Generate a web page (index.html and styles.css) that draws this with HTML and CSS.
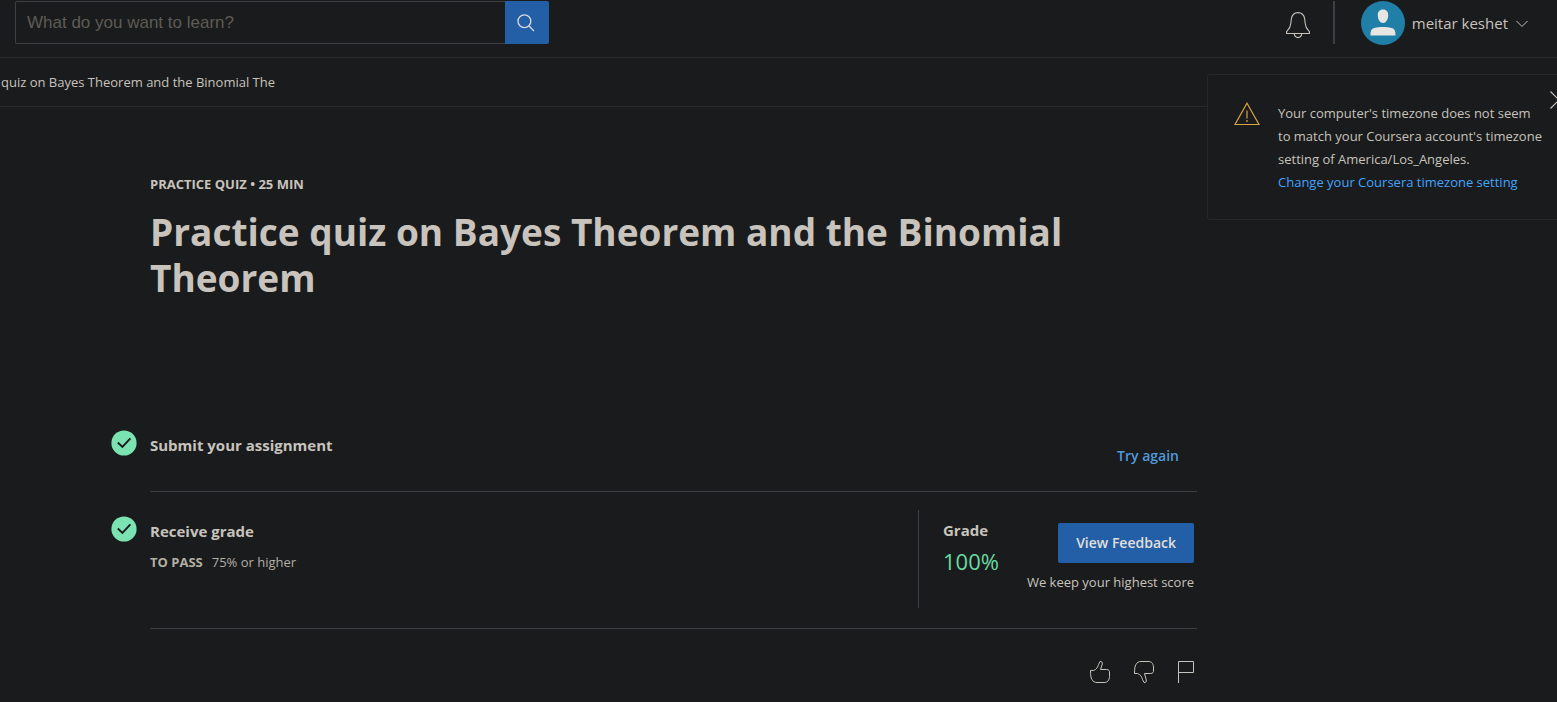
FILE: index.html
```html
<!DOCTYPE html>
<html lang="en">
<head>
<meta charset="utf-8">
<title>Practice quiz on Bayes Theorem and the Binomial Theorem</title>
<link rel="stylesheet" href="styles.css">
</head>
<body>
<header class="topbar">
  <form class="search" role="search">
    <input class="search-input" type="text" placeholder="What do you want to learn?" aria-label="Search">
    <button class="search-button" type="button" aria-label="Submit search">
      <svg width="18" height="18" viewBox="0 0 18 18" fill="none" stroke="currentColor" stroke-width="1.3"><circle cx="7.4" cy="7.2" r="6.4"/><path d="M12 12l5 5"/></svg>
    </button>
  </form>
  <div class="account">
    <button class="icon-button bell" type="button" aria-label="Notifications">
      <svg width="26" height="28" viewBox="0 0 26 28" fill="none" stroke="currentColor" stroke-width="1.1"><path d="M1.6 22.5V20.5C3.500 18.500 5.500 17 5.800 12.500L6.300 8C7 3.800 9.300 1.600 13 1.600S19 3.800 19.700 8L20.200 12.500C20.500 17 22.500 18.500 24.400 20.500V22.500Z"/><path d="M9.200 22.700C9.600 25.500 11 26.600 13 26.600S16.400 25.500 16.800 22.700"/></svg>
    </button>
    <span class="divider"></span>
    <button class="profile" type="button">
      <svg class="avatar" width="44" height="44" viewBox="0 0 44 44"><circle cx="22" cy="22" r="22" fill="#207fa6"/><path d="M22 8.500c3.500 0 5.400 2.400 5.200 6-.2 4.200-2.300 7.500-5.200 7.500s-5-3.300-5.200-7.500c-.2-3.600 1.700-6 5.200-6z" fill="#e8e6e3"/><path d="M9.500 34.500c0-5.500 1.200-6.800 4-7.500 5-1.300 12-1.300 17 0 2.800.7 4 2 4 7.500z" fill="#e8e6e3"/></svg>
      <span>meitar keshet</span>
      <svg class="caret" width="12" height="8" viewBox="0 0 12 8" fill="none" stroke="currentColor"><path d="M.5 1L6 6.500 11.500 1"/></svg>
    </button>
  </div>
</header>

<nav class="breadcrumb">quiz on Bayes Theorem and the Binomial The</nav>

<aside class="toast">
  <svg class="toast-icon" width="26" height="24" viewBox="0 0 26 24" fill="none" stroke="currentColor" stroke-width="1.2"><path d="M13 1.200L25 22.500H1Z"/><path d="M13 8.500V16.500M13 18V20"/></svg>
  <p class="toast-text">Your computer's timezone does not seem to match your Coursera account's timezone setting of America/Los_Angeles.<br><a href="#">Change your Coursera timezone setting</a></p>
  <button class="toast-close" type="button" aria-label="Close">
    <svg width="18" height="18" viewBox="0 0 18 18" fill="none" stroke="currentColor" stroke-width="1.2"><path d="M.5.5l17 17M17.5.5l-17 17"/></svg>
  </button>
</aside>

<main class="content">
  <div class="intro">
    <p class="eyebrow">PRACTICE QUIZ • 25 MIN</p>
    <h1 class="title">Practice quiz on Bayes Theorem and the Binomial Theorem</h1>
  </div>

  <section class="step">
    <svg class="check" width="26" height="26" viewBox="0 0 26 26"><circle cx="13" cy="13" r="12.6" fill="#7be3b1"/><path d="M6.800 12.500l4.600 4.500 8-8.700" fill="none" stroke="#191b1c" stroke-width="1.9"/></svg>
    <div class="step-body submit">
      <h2 class="step-title">Submit your assignment</h2>
      <a class="try-again" href="#">Try again</a>
    </div>
  </section>

  <section class="step graded">
    <svg class="check" width="26" height="26" viewBox="0 0 26 26"><circle cx="13" cy="13" r="12.6" fill="#7be3b1"/><path d="M6.800 12.500l4.600 4.500 8-8.700" fill="none" stroke="#191b1c" stroke-width="1.9"/></svg>
    <div class="step-body receive">
      <div>
        <h2 class="step-title">Receive grade</h2>
        <p class="pass"><strong>TO PASS</strong><span>75% or higher</span></p>
      </div>
      <div class="grade-panel">
        <div>
          <h3 class="grade-title">Grade</h3>
          <p class="grade-value">100%</p>
        </div>
        <div class="feedback">
          <button class="feedback-button" type="button">View Feedback</button>
          <p class="feedback-note">We keep your highest score</p>
        </div>
      </div>
    </div>
  </section>

  <div class="reactions">
    <button class="icon-button" type="button" aria-label="Like">
      <svg width="22" height="24" viewBox="0 0 22 24" fill="none" stroke="currentColor" stroke-linejoin="round"><path d="M1.500 10.500H4.500C7.500 9.500 8.500 7.500 9.500 4.500L11 1.500C12.500 1 13.600 2.300 13.300 4L11.500 9.500H17.500C20 9.500 20.800 11 20.500 13V16.500C20.200 20.500 18.500 22.500 15 22.500H8C5.500 22.500 4 21.500 3 19.500C1.800 18 1.500 14.500 1.500 10.500Z"/></svg>
    </button>
    <button class="icon-button" type="button" aria-label="Dislike">
      <svg width="22" height="24" viewBox="0 0 22 24" fill="none" stroke="currentColor" stroke-linejoin="round"><path d="M1.500 13.500H4.500C7.500 14.500 8.500 16.500 9.500 19.500L11 22.500C12.500 23 13.600 21.700 13.300 20L11.500 13.500H17.500C20 13.500 20.800 12 20.500 10V7C20.200 3 18.500 1.500 15 1.500H8C5.500 1.500 4 2.500 3 4.500C1.800 6 1.500 9.500 1.500 13.500Z"/></svg>
    </button>
    <button class="icon-button" type="button" aria-label="Report">
      <svg width="18" height="24" viewBox="0 0 18 24" fill="none" stroke="currentColor"><path d="M1.500 23V1.500H16.500V12.500H1.500"/></svg>
    </button>
  </div>
</main>
</body>
</html>
```
FILE: styles.css
```css
* { box-sizing: border-box; }

body {
  position: relative;
  margin: 0;
  min-height: 100vh;
  overflow: hidden;
  background: #191b1c;
  color: #c8c3bc;
  font: 13px/20px "Open Sans", sans-serif;
}

h1, h2, h3, p { margin: 0; }
a { text-decoration: none; }

button {
  padding: 0;
  border: 0;
  background: none;
  color: inherit;
  font: inherit;
  cursor: pointer;
}

svg { display: block; flex: none; }

.topbar {
  display: flex;
  justify-content: space-between;
  height: 58px;
  padding: 1px 29px 0 15px;
  border-bottom: 1px solid #27292b;
}

.search { display: flex; width: 534px; height: 43px; }

.search-input {
  flex: 1;
  min-width: 0;
  padding: 0 11px;
  border: 1px solid #3c4042;
  border-right: 0;
  border-radius: 2px 0 0 2px;
  background: #191b1c;
  color: #c8c3bc;
  font: 17px "Liberation Sans", sans-serif;
}

.search-input::placeholder { color: #5f5b55; opacity: 1; }

.search-button {
  display: grid;
  place-items: center;
  width: 44px;
  padding-right: 3px;
  border-radius: 0 2px 2px 0;
  background: #225fa6;
  color: #dddad6;
}

.account { display: flex; height: 43px; align-items: center; }
.bell { padding-top: 4px; }
.divider { width: 2px; height: 43px; margin: 0 26px 0 22px; background: #3c4042; }
.profile { display: flex; align-items: center; gap: 7px; height: 42px; font-size: 15px; }
.profile .caret { margin: 2px 0 0 1px; }

.breadcrumb {
  height: 49px;
  padding: 14px 1px;
  border-bottom: 1px solid #27292b;
  white-space: nowrap;
}

.toast {
  position: absolute;
  top: 74px;
  right: -24px;
  display: flex;
  gap: 18px;
  width: 374px;
  padding: 27px 26px 25px;
  border: 1px solid #252829;
  border-radius: 3px;
  background: #191b1c;
}

.toast-icon { color: #d9a441; }
.toast-text { width: 268px; line-height: 23px; }
.toast-text a { color: #41a4ff; }
.toast-close { position: absolute; top: 16px; right: 12px; }

.content { margin: 0 360px 0 111px; }
.intro { min-height: 323px; padding: 67px 0 0 39px; }

.eyebrow { font-weight: 700; }
.title { margin-top: 15px; font-size: 37px; line-height: 46px; }

.step { display: flex; gap: 13px; }
.step-body { flex: 1; display: flex; justify-content: space-between; border-bottom: 1px solid #3c4042; }
.submit { padding: 4px 18px 24px 0; }
.step-title { font-size: 15px; line-height: 22px; }
.try-again { margin-top: 11px; color: #5299db; font-size: 14px; font-weight: 600; line-height: 22px; }

.graded { padding-top: 18px; }
.graded .check { margin-top: 6px; }
.receive { padding-bottom: 20px; }
.receive .step-title { margin-top: 10px; }
.pass { display: flex; gap: 9px; margin-top: 10px; color: #b3aea6; }

.grade-panel {
  display: flex;
  justify-content: space-between;
  width: 279px;
  height: 98px;
  padding: 9px 3px 0 24px;
  border-left: 1px solid #3c4042;
}

.grade-title { font-size: 15px; line-height: 22px; }
.grade-value { margin-top: 4px; color: #68dba2; font-size: 22px; line-height: 32px; }
.feedback { display: flex; flex-direction: column; align-items: flex-end; gap: 9px; padding-top: 4px; }

.feedback-button {
  height: 40px;
  padding: 0 18px;
  border-radius: 2px;
  background: #225fa6;
  color: #e2dfdb;
  font-size: 14px;
  font-weight: 600;
}

.feedback-note { white-space: nowrap; }
.reactions { display: flex; justify-content: flex-end; gap: 22px; padding: 31px 2px 0 0; }
```
